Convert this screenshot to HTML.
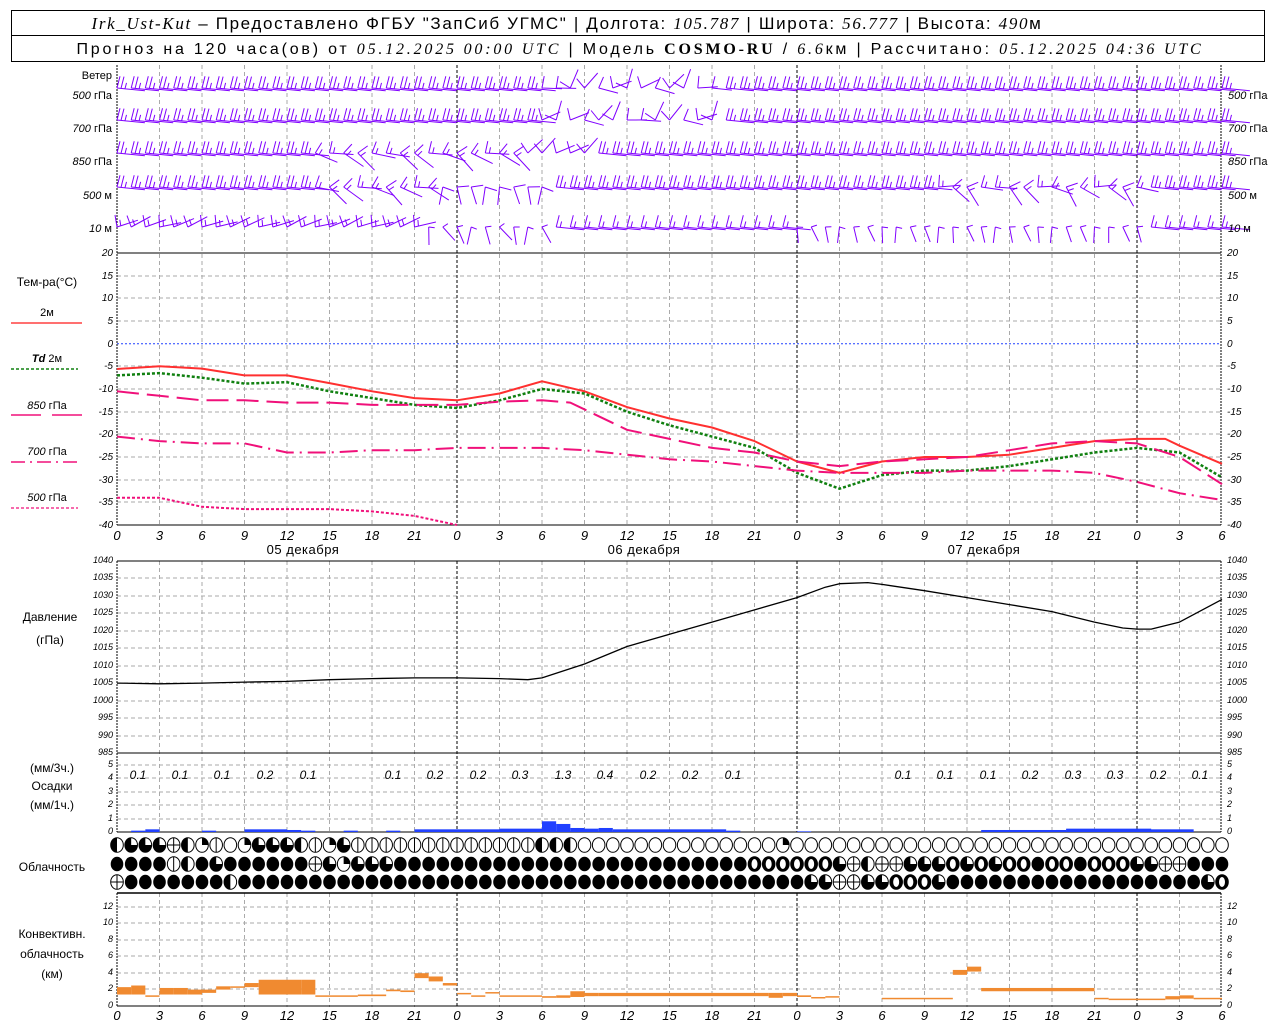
<!DOCTYPE html>
<html><head><meta charset="utf-8"><style>
html,body{margin:0;padding:0;background:#fff;width:1280px;height:1024px;overflow:hidden}
svg{display:block;font-family:"Liberation Sans",sans-serif}
.t{font-size:10px;font-style:italic;fill:#000}
.l{font-size:12px;fill:#000}
</style></head><body>
<svg id="s" width="1280" height="1024" viewBox="0 0 1280 1024">
<rect x="11.5" y="10.5" width="1253" height="25" fill="none" stroke="#000"/>
<rect x="11.5" y="35.5" width="1253" height="26" fill="none" stroke="#000"/>
<text x="567" y="29" text-anchor="middle" style="font-size:17px;letter-spacing:1.65px"><tspan font-style="italic" font-family="Liberation Serif">Irk_Ust-Kut</tspan> – Предоставлено ФГБУ "ЗапСиб УГМС" | Долгота: <tspan font-style="italic" font-family="Liberation Serif">105.787</tspan> | Широта: <tspan font-style="italic" font-family="Liberation Serif">56.777</tspan> | Высота: <tspan font-style="italic" font-family="Liberation Serif">490</tspan>м</text>
<text x="640" y="54" text-anchor="middle" style="font-size:16px;letter-spacing:2.8px">Прогноз на 120 часа(ов) от <tspan font-style="italic" font-family="Liberation Serif">05.12.2025 00:00 UTC</tspan>  | Модель <tspan font-weight="bold" font-family="Liberation Serif">COSMO-RU</tspan> / <tspan font-style="italic" font-family="Liberation Serif">6.6</tspan>км | Рассчитано: <tspan font-style="italic" font-family="Liberation Serif">05.12.2025 04:36 UTC</tspan></text>
<g id="grid"></g>
<g id="data"></g>
<g class="l" style="font-size:11px">
<text x="112" y="79" text-anchor="end">Ветер</text>
<text x="112" y="99" text-anchor="end"><tspan font-style="italic">500</tspan> гПа</text>
<text x="112" y="132" text-anchor="end"><tspan font-style="italic">700</tspan> гПа</text>
<text x="112" y="165" text-anchor="end"><tspan font-style="italic">850</tspan> гПа</text>
<text x="112" y="199" text-anchor="end"><tspan font-style="italic">500</tspan> м</text>
<text x="112" y="232" text-anchor="end"><tspan font-style="italic">10</tspan>   м</text>
<text x="1228" y="99"><tspan font-style="italic">500</tspan> гПа</text>
<text x="1228" y="132"><tspan font-style="italic">700</tspan> гПа</text>
<text x="1228" y="165"><tspan font-style="italic">850</tspan> гПа</text>
<text x="1228" y="199"><tspan font-style="italic">500</tspan> м</text>
<text x="1228" y="232"><tspan font-style="italic">10</tspan>   м</text>
<text x="47" y="286" text-anchor="middle" style="font-size:12px">Тем-ра(°C)</text>
<text x="47" y="316" text-anchor="middle">2м</text>
<text x="47" y="362" text-anchor="middle"><tspan font-style="italic" font-weight="bold">Td</tspan>  2м</text>
<text x="47" y="409" text-anchor="middle"><tspan font-style="italic">850</tspan> гПа</text>
<text x="47" y="455" text-anchor="middle"><tspan font-style="italic">700</tspan> гПа</text>
<text x="47" y="501" text-anchor="middle"><tspan font-style="italic">500</tspan> гПа</text>
<text x="50" y="621" text-anchor="middle" style="font-size:12px">Давление</text>
<text x="50" y="644" text-anchor="middle" style="font-size:12px">(гПа)</text>
<text x="52" y="772" text-anchor="middle" style="font-size:12px">(мм/3ч.)</text>
<text x="52" y="790" text-anchor="middle" style="font-size:12px">Осадки</text>
<text x="52" y="809" text-anchor="middle" style="font-size:12px">(мм/1ч.)</text>
<text x="52" y="871" text-anchor="middle" style="font-size:12px">Облачность</text>
<text x="52" y="938" text-anchor="middle" style="font-size:12px">Конвективн.</text>
<text x="52" y="958" text-anchor="middle" style="font-size:12px">облачность</text>
<text x="52" y="978" text-anchor="middle" style="font-size:12px">(км)</text>
</g>
<line x1="11" y1="323" x2="82" y2="323" stroke="#ff4040" stroke-width="1.5"/>
<line x1="11" y1="369" x2="78" y2="369" stroke="#108010" stroke-dasharray="3,2" stroke-width="1.5"/>
<line x1="11" y1="415" x2="41" y2="415" stroke="#f0107a" stroke-width="1.5"/>
<line x1="52" y1="415" x2="82" y2="415" stroke="#f0107a" stroke-width="1.5"/>
<line x1="11" y1="462" x2="78" y2="462" stroke="#f0107a" stroke-dasharray="14,5,2,5" stroke-width="1.5"/>
<line x1="11" y1="508" x2="78" y2="508" stroke="#f0107a" stroke-dasharray="3,2" stroke-width="1.2"/>
<g class="t">
<text text-anchor="end" dominant-baseline="middle"><tspan x="113" y="253">20</tspan><tspan x="113" y="276">15</tspan><tspan x="113" y="298">10</tspan><tspan x="113" y="321">5</tspan><tspan x="113" y="344">0</tspan><tspan x="113" y="366">-5</tspan><tspan x="113" y="389">-10</tspan><tspan x="113" y="412">-15</tspan><tspan x="113" y="434">-20</tspan><tspan x="113" y="457">-25</tspan><tspan x="113" y="480">-30</tspan><tspan x="113" y="502">-35</tspan><tspan x="113" y="525">-40</tspan></text>
<text dominant-baseline="middle"><tspan x="1227" y="253">20</tspan><tspan x="1227" y="276">15</tspan><tspan x="1227" y="298">10</tspan><tspan x="1227" y="321">5</tspan><tspan x="1227" y="344">0</tspan><tspan x="1227" y="366">-5</tspan><tspan x="1227" y="389">-10</tspan><tspan x="1227" y="412">-15</tspan><tspan x="1227" y="434">-20</tspan><tspan x="1227" y="457">-25</tspan><tspan x="1227" y="480">-30</tspan><tspan x="1227" y="502">-35</tspan><tspan x="1227" y="525">-40</tspan></text>
<text text-anchor="end" dominant-baseline="middle" style="font-size:9px"><tspan x="113" y="561">1040</tspan><tspan x="113" y="578">1035</tspan><tspan x="113" y="596">1030</tspan><tspan x="113" y="613">1025</tspan><tspan x="113" y="631">1020</tspan><tspan x="113" y="648">1015</tspan><tspan x="113" y="666">1010</tspan><tspan x="113" y="683">1005</tspan><tspan x="113" y="701">1000</tspan><tspan x="113" y="718">995</tspan><tspan x="113" y="736">990</tspan><tspan x="113" y="753">985</tspan></text>
<text dominant-baseline="middle" style="font-size:9px"><tspan x="1227" y="561">1040</tspan><tspan x="1227" y="578">1035</tspan><tspan x="1227" y="596">1030</tspan><tspan x="1227" y="613">1025</tspan><tspan x="1227" y="631">1020</tspan><tspan x="1227" y="648">1015</tspan><tspan x="1227" y="666">1010</tspan><tspan x="1227" y="683">1005</tspan><tspan x="1227" y="701">1000</tspan><tspan x="1227" y="718">995</tspan><tspan x="1227" y="736">990</tspan><tspan x="1227" y="753">985</tspan></text>
<text text-anchor="end" dominant-baseline="middle" style="font-size:9px"><tspan x="113" y="765">5</tspan><tspan x="113" y="778">4</tspan><tspan x="113" y="792">3</tspan><tspan x="113" y="805">2</tspan><tspan x="113" y="819">1</tspan><tspan x="113" y="832">0</tspan></text>
<text dominant-baseline="middle" style="font-size:9px"><tspan x="1227" y="765">5</tspan><tspan x="1227" y="778">4</tspan><tspan x="1227" y="792">3</tspan><tspan x="1227" y="805">2</tspan><tspan x="1227" y="819">1</tspan><tspan x="1227" y="832">0</tspan></text>
<text text-anchor="end" dominant-baseline="middle" style="font-size:9px"><tspan x="113" y="907">12</tspan><tspan x="113" y="923">10</tspan><tspan x="113" y="940">8</tspan><tspan x="113" y="956">6</tspan><tspan x="113" y="973">4</tspan><tspan x="113" y="989">2</tspan><tspan x="113" y="1006">0</tspan></text>
<text dominant-baseline="middle" style="font-size:9px"><tspan x="1227" y="907">12</tspan><tspan x="1227" y="923">10</tspan><tspan x="1227" y="940">8</tspan><tspan x="1227" y="956">6</tspan><tspan x="1227" y="973">4</tspan><tspan x="1227" y="989">2</tspan><tspan x="1227" y="1006">0</tspan></text>
<text text-anchor="middle" y="540" style="font-size:13px"><tspan x="117">0</tspan><tspan x="159.5">3</tspan><tspan x="202">6</tspan><tspan x="244.5">9</tspan><tspan x="287">12</tspan><tspan x="329.5">15</tspan><tspan x="372">18</tspan><tspan x="414.5">21</tspan><tspan x="457">0</tspan><tspan x="499.5">3</tspan><tspan x="542">6</tspan><tspan x="584.5">9</tspan><tspan x="627">12</tspan><tspan x="669.5">15</tspan><tspan x="712">18</tspan><tspan x="754.5">21</tspan><tspan x="797">0</tspan><tspan x="839.5">3</tspan><tspan x="882">6</tspan><tspan x="924.5">9</tspan><tspan x="967">12</tspan><tspan x="1009.5">15</tspan><tspan x="1052">18</tspan><tspan x="1094.5">21</tspan><tspan x="1137">0</tspan><tspan x="1179.5">3</tspan><tspan x="1222">6</tspan></text>
<text text-anchor="middle" y="1020" style="font-size:13px"><tspan x="117">0</tspan><tspan x="159.5">3</tspan><tspan x="202">6</tspan><tspan x="244.5">9</tspan><tspan x="287">12</tspan><tspan x="329.5">15</tspan><tspan x="372">18</tspan><tspan x="414.5">21</tspan><tspan x="457">0</tspan><tspan x="499.5">3</tspan><tspan x="542">6</tspan><tspan x="584.5">9</tspan><tspan x="627">12</tspan><tspan x="669.5">15</tspan><tspan x="712">18</tspan><tspan x="754.5">21</tspan><tspan x="797">0</tspan><tspan x="839.5">3</tspan><tspan x="882">6</tspan><tspan x="924.5">9</tspan><tspan x="967">12</tspan><tspan x="1009.5">15</tspan><tspan x="1052">18</tspan><tspan x="1094.5">21</tspan><tspan x="1137">0</tspan><tspan x="1179.5">3</tspan><tspan x="1222">6</tspan></text>
<text text-anchor="middle" y="779" style="font-size:12px"><tspan x="138">0.1</tspan><tspan x="180">0.1</tspan><tspan x="222">0.1</tspan><tspan x="265">0.2</tspan><tspan x="308">0.1</tspan><tspan x="393">0.1</tspan><tspan x="435">0.2</tspan><tspan x="478">0.2</tspan><tspan x="520">0.3</tspan><tspan x="563">1.3</tspan><tspan x="605">0.4</tspan><tspan x="648">0.2</tspan><tspan x="690">0.2</tspan><tspan x="733">0.1</tspan><tspan x="903">0.1</tspan><tspan x="945">0.1</tspan><tspan x="988">0.1</tspan><tspan x="1030">0.2</tspan><tspan x="1073">0.3</tspan><tspan x="1115">0.3</tspan><tspan x="1158">0.2</tspan><tspan x="1200">0.1</tspan></text>
</g>
<g class="l" style="font-size:13px;letter-spacing:0.5px" text-anchor="middle">
<text x="303" y="554">05 декабря</text>
<text x="644" y="554">06 декабря</text>
<text x="984" y="554">07 декабря</text>
</g>
</svg>
<script>
var NS="http://www.w3.org/2000/svg";
var G=document.getElementById('grid'),D=document.getElementById('data');
function el(p,n,a){var e=document.createElementNS(NS,n);for(var k in a)e.setAttribute(k,a[k]);p.appendChild(e);return e;}
function X(h){return 117+h*14.1667;}
function L(p,x1,y1,x2,y2,c,w,da){var a={x1:x1,y1:y1,x2:x2,y2:y2,stroke:c,'stroke-width':w||1};if(da)a['stroke-dasharray']=da;return el(p,'line',a);}
function hg(arr){arr.forEach(function(y){L(G,117,y,1221,y,'#aaa',1,'4,3');});}
hg([276,298,321,366,389,412,434,457,480,502,525]);
L(G,117,343.7,1221,343.7,'#2040ff',1,'2,2');
hg([578,596,613,631,648,666,683,701,718,736]);
hg([765,778,792,805,819]);
hg([907,923,940,956,973,989]);
for(var h=3;h<78;h+=3){var x=X(h);var day=(h%24==0);
 [[65,525],[561,832],[893,1007]].forEach(function(r){L(G,x,r[0],x,r[1],day?'#000':'#aaa',1,day?'3,2':'4,3');});}
[[65,525],[561,832],[893,1007]].forEach(function(r){L(G,117,r[0],117,r[1],'#000',1,'2,1');L(G,1221,r[0],1221,r[1],'#000',1,'2,1');});
L(G,117,253,1221,253,'#000',1);L(G,117,525,1221,525,'#000',1);L(G,117,561,1221,561,'#000',1);
L(G,117,753,1221,753,'#000',1);L(G,117,832,1221,832,'#000',1);L(G,117,893,1221,893,'#000',1.5);L(G,117,1006,1221,1006,'#000',1);
var lev=[88,120,153,187,227],P='#8000ff';
for(var i=0;i<5;i++){for(h=0;h<=78;h++){
 var x=X(h),y=lev[i];
 var ang=0.1, len=28, nb=i==4?1.5:2.5;
 var s=Math.sin(h*1.7+i*2.3);
 if(i==4&&h>=0&&h<=22){ang=-0.35+0.15*s;len=22;}
 if((i==2||i==3)&&h>=14&&h<=30){ang=0.45+0.4*s;len=24;nb=1.5;}
 if(i==4&&h>=22&&h<=30){ang=1.3+0.5*s;len=18;nb=0.5;}
 if(i==4&&h>=48&&h<=72){ang=1.4+0.3*s;len=16;nb=0.5;}
 if(i==3&&h>=23&&h<=30){ang=1.5+0.3*s;len=18;nb=1;}
 if(i<=1&&h>=30&&h<=42){ang=-0.5+0.8*s;len=20;nb=1;}
 if(i==2&&h>=29&&h<=33){ang=-0.6+0.3*s;len=20;nb=1;}
 if(i==3&&h>=58&&h<=72){ang=0.5+0.6*s;len=22;nb=1.5;}
 var ex=x+len*Math.cos(ang), ey=y+len*Math.sin(ang);
 var d='M'+x.toFixed(1)+' '+y.toFixed(1)+'L'+ex.toFixed(1)+' '+ey.toFixed(1);
 var px=Math.sin(ang)+0.15*Math.cos(ang),py=-Math.cos(ang)+0.15*Math.sin(ang),ux=Math.cos(ang),uy=Math.sin(ang);
 for(var b=0;b<Math.ceil(nb);b++){var bl=(b+1>nb)?6:12;var bx=x+ux*b*4,by=y+uy*b*4;
  d+='M'+bx.toFixed(1)+' '+by.toFixed(1)+'L'+(bx+px*bl).toFixed(1)+' '+(by+py*bl).toFixed(1);}
 el(D,'path',{d:d,stroke:P,fill:'none','stroke-width':1});
}}
function yT(t){return 253+(20-t)*4.533;}
function curve(pp,c,w,da,f){var pts=pp.map(function(p){return X(p[0]).toFixed(1)+','+f(p[1]).toFixed(1);});var a={points:pts.join(' '),fill:'none',stroke:c,'stroke-width':w,'stroke-linejoin':'round'};if(da)a['stroke-dasharray']=da;el(D,'polyline',a);}
curve([[0,-5.6],[3,-5],[6,-5.5],[9,-7],[12,-7],[15,-8.7],[18,-10.5],[21,-12],[24,-12.5],[27,-11],[30,-8.3],[33,-10.5],[36,-14],[39,-16.5],[42,-18.5],[45,-21.5],[48,-26],[51,-28.5],[54,-26],[57,-25],[60,-25],[63,-24.5],[66,-23],[69,-21.5],[72,-21],[74,-21],[75,-22.5],[78,-26.5]],'#ff3030',2,null,yT);
curve([[0,-7],[3,-6.5],[6,-7.5],[9,-8.8],[12,-8.5],[15,-10.5],[18,-12],[21,-13.5],[24,-14.2],[27,-12.5],[30,-10],[33,-11],[36,-15],[39,-18],[42,-20.5],[45,-23],[48,-28.5],[51,-32],[54,-29],[57,-28],[60,-28],[63,-27],[66,-25.5],[69,-24],[72,-23],[75,-24],[78,-29.5]],'#108010',2.5,'3,2',yT);
curve([[0,-10.5],[3,-11.5],[6,-12.5],[9,-12.5],[12,-13],[15,-13],[18,-13.5],[21,-13.5],[24,-13.5],[27,-12.8],[30,-12.5],[32,-13],[36,-19],[39,-21],[42,-23],[45,-24],[48,-26],[51,-27],[54,-26],[57,-25.5],[60,-25],[63,-23.5],[66,-22],[69,-21.5],[72,-22],[75,-25],[78,-31]],'#f0107a',2,'22,8',yT);
curve([[0,-20.5],[3,-21.5],[6,-22],[9,-22],[12,-24],[15,-24],[18,-23.5],[21,-23.5],[24,-23],[27,-23],[30,-23],[33,-23.5],[36,-24.5],[39,-25.5],[42,-26],[45,-27],[48,-28],[51,-28.5],[54,-28.5],[57,-28.5],[60,-28],[63,-28],[66,-28],[69,-28.5],[72,-30.5],[75,-33],[78,-34.5]],'#f0107a',2,'18,6,2,6',yT);
curve([[0,-34],[3,-34],[6,-36],[9,-36.5],[12,-36.5],[15,-36.5],[18,-37],[21,-38],[24,-40]],'#f0107a',2,'3,2',yT);
function yP(p){return 561+(1040-p)*3.49;}
curve([[0,1005],[3,1004.8],[6,1005],[9,1005.3],[12,1005.5],[15,1006],[18,1006.3],[21,1006.5],[24,1006.5],[27,1006.3],[29,1006],[30,1006.5],[33,1010.5],[36,1015.5],[39,1019],[42,1022.5],[45,1026],[48,1029.5],[50,1032.5],[51,1033.5],[53,1033.8],[54,1033.3],[57,1031.5],[60,1029.5],[63,1027.5],[66,1025.5],[69,1022.5],[71,1020.8],[72,1020.5],[73,1020.5],[75,1022.5],[78,1029]],'#000',1.3,null,yP);
function pb(h1,h2,v){el(D,'rect',{x:X(h1),y:832-v*13.4,width:X(h2)-X(h1),height:v*13.4,fill:'#2040ff'});}
[[1,2,.1],[2,3,.2],[6,7,.1],[9,12,.2],[12,13,.15],[13,14,.1],[16,17,.1],[19,20,.1],[21,24,.2],[24,27,.2],[27,30,.25],[30,31,.8],[31,32,.6],[32,33,.3],[33,34,.25],[34,35,.3],[35,43,.2],[43,44,.1],[48,49,.05],[61,67,.15],[67,76,.2],[67,73,.25]].forEach(function(a){pb(a[0],a[1],a[2]);});
var rows=['HQQQTHqVWqQQQHVqQVVVVVVVVVVVVVHHHWWWWWWWWWWWWWWqWWWWWWWWWWWWWWWWWWWWWWWWWWWWWWW',
          'BBBBVHBQBBBBBBTQqQQQBBBBBBBBBBBBBBBBBBBBBBBBBOOOOOOQTHTTQQQOQOQOOBOOBOOOQQTTBBBB',
          'TBBBBBBBHBBBBBBBBBBBBBBBBBBBBBBBBBBBBBBBBBBBBBBBBQQTTQQOOOQBBBBBBBBBBBBBBBBBBQOOO'];
var cy=[845,864,882];
for(var r=0;r<3;r++)for(h=0;h<=78;h++){var c=rows[r][h]||'B',cx=X(h),y=cy[r],rx=6.3,ry=7.3;
 if(c=='B'){el(D,'ellipse',{cx:cx,cy:y,rx:rx,ry:ry,fill:'#000'});continue;}
 el(D,'ellipse',{cx:cx,cy:y,rx:rx,ry:ry,fill:'#fff',stroke:'#000','stroke-width':1});
 if(c=='H')el(D,'path',{d:'M'+cx+' '+(y-ry)+'A'+rx+' '+ry+' 0 0 0 '+cx+' '+(y+ry)+'Z',fill:'#000'});
 if(c=='Q')el(D,'path',{d:'M'+cx+' '+y+'L'+cx+' '+(y-ry)+'A'+rx+' '+ry+' 0 1 0 '+(cx+rx)+' '+y+'Z',fill:'#000'});
 if(c=='q')el(D,'path',{d:'M'+cx+' '+y+'L'+cx+' '+(y-ry)+'A'+rx+' '+ry+' 0 0 1 '+(cx+rx)+' '+y+'Z',fill:'#000'});
 if(c=='V'||c=='T')L(D,cx,y-ry,cx,y+ry,'#000',1);
 if(c=='T')L(D,cx-rx,y,cx+rx,y,'#000',1);
 if(c=='O'){el(D,'ellipse',{cx:cx,cy:y,rx:rx,ry:ry,fill:'#000'});el(D,'ellipse',{cx:cx,cy:y,rx:3,ry:5,fill:'#fff'});}
}
function yC(k){return 1006-k*8.2;}
[[0,1,1.4,2.3],[1,2,1.4,2.5],[2,3,1.2,1.3],[3,4,1.4,2.2],[4,5,1.4,2.2],[5,6,1.4,2.0],[6,7,1.6,2.0],[7,8,2.0,2.4],[8,9,2.3,2.4],[9,10,2.3,2.8],[10,12,1.4,3.2],[12,13,1.4,3.2],[13,14,1.4,3.2],[14,17,1.2,1.3],[17,19,1.2,1.4],[19,20,1.8,2.0],[20,21,1.7,1.9],[21,22,3.4,4.0],[22,23,3.0,3.6],[23,24,2.5,2.8],[24,25,1.5,1.6],[25,26,1.2,1.3],[26,27,1.6,1.7],[27,30,1.2,1.3],[30,31,1.0,1.2],[31,32,1.0,1.3],[32,33,1.1,1.8],[33,34,1.2,1.6],[34,46,1.2,1.6],[46,47,1.0,1.6],[47,48,1.2,1.6],[48,49,1.1,1.3],[49,50,1.0,1.1],[50,51,1.1,1.2],[54,59,0.9,1.0],[59,60,3.8,4.4],[60,61,4.2,4.8],[61,69,1.8,2.2],[69,70,0.9,1.0],[70,74,0.8,0.9],[74,75,0.8,1.2],[75,76,0.9,1.3],[76,78,0.9,1.0]].forEach(function(a){
 el(D,'rect',{x:X(a[0]),y:yC(a[3]),width:X(a[1])-X(a[0]),height:Math.max(1.5,(a[3]-a[2])*8.2),fill:'#f08a30'});});
</script>
</body></html>
